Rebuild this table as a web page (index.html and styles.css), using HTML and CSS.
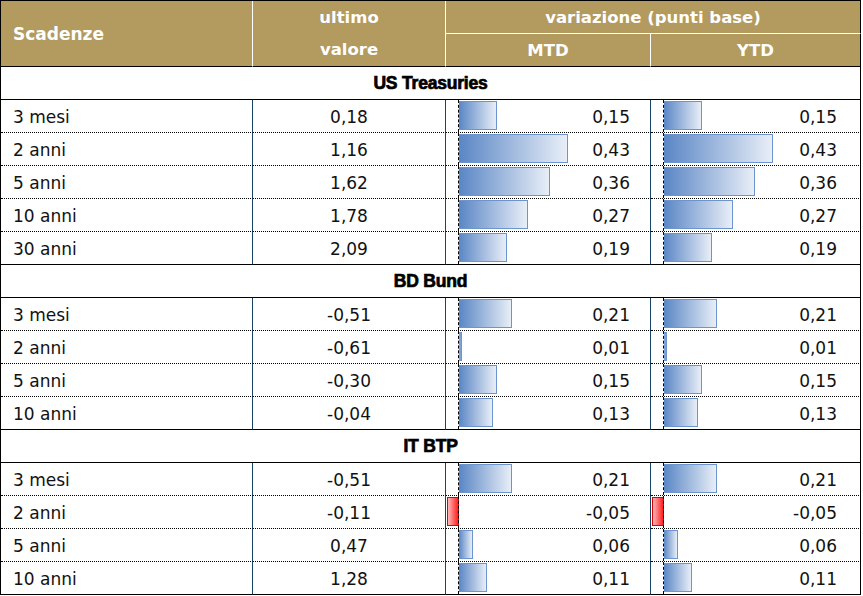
FILE: index.html
```html
<!DOCTYPE html>
<html lang="it">
<head>
<meta charset="utf-8">
<title>Scadenze</title>
<link rel="stylesheet" href="styles.css">
</head>
<body>
<div class="tbl">
  <div class="h h-scad">Scadenze</div>
  <div class="h h-ultimo"><span>ultimo</span><span>valore</span></div>
  <div class="h h-var">variazione (punti base)</div>
  <div class="h h-mtd">MTD</div>
  <div class="h h-ytd">YTD</div>

  <div class="sec">US Treasuries</div>
  <div class="row">
    <div class="c name">3 mesi</div><div class="c val">0,18</div>
    <div class="c bar"><div class="neg"></div><div class="pos"><i class="b" style="width:38px"></i><span>0,15</span></div></div>
    <div class="c bar ytd"><div class="neg"></div><div class="pos"><i class="b" style="width:38px"></i><span>0,15</span></div></div>
  </div>
  <div class="row">
    <div class="c name">2 anni</div><div class="c val">1,16</div>
    <div class="c bar"><div class="neg"></div><div class="pos"><i class="b" style="width:109px"></i><span>0,43</span></div></div>
    <div class="c bar ytd"><div class="neg"></div><div class="pos"><i class="b" style="width:109px"></i><span>0,43</span></div></div>
  </div>
  <div class="row">
    <div class="c name">5 anni</div><div class="c val">1,62</div>
    <div class="c bar"><div class="neg"></div><div class="pos"><i class="b" style="width:91px"></i><span>0,36</span></div></div>
    <div class="c bar ytd"><div class="neg"></div><div class="pos"><i class="b" style="width:91px"></i><span>0,36</span></div></div>
  </div>
  <div class="row">
    <div class="c name">10 anni</div><div class="c val">1,78</div>
    <div class="c bar"><div class="neg"></div><div class="pos"><i class="b" style="width:69px"></i><span>0,27</span></div></div>
    <div class="c bar ytd"><div class="neg"></div><div class="pos"><i class="b" style="width:69px"></i><span>0,27</span></div></div>
  </div>
  <div class="row end">
    <div class="c name">30 anni</div><div class="c val">2,09</div>
    <div class="c bar"><div class="neg"></div><div class="pos"><i class="b" style="width:48px"></i><span>0,19</span></div></div>
    <div class="c bar ytd"><div class="neg"></div><div class="pos"><i class="b" style="width:48px"></i><span>0,19</span></div></div>
  </div>

  <div class="sec">BD Bund</div>
  <div class="row">
    <div class="c name">3 mesi</div><div class="c val">-0,51</div>
    <div class="c bar"><div class="neg"></div><div class="pos"><i class="b" style="width:53px"></i><span>0,21</span></div></div>
    <div class="c bar ytd"><div class="neg"></div><div class="pos"><i class="b" style="width:53px"></i><span>0,21</span></div></div>
  </div>
  <div class="row">
    <div class="c name">2 anni</div><div class="c val">-0,61</div>
    <div class="c bar"><div class="neg"></div><div class="pos"><i class="b tiny" style="width:3px"></i><span>0,01</span></div></div>
    <div class="c bar ytd"><div class="neg"></div><div class="pos"><i class="b tiny" style="width:3px"></i><span>0,01</span></div></div>
  </div>
  <div class="row">
    <div class="c name">5 anni</div><div class="c val">-0,30</div>
    <div class="c bar"><div class="neg"></div><div class="pos"><i class="b" style="width:38px"></i><span>0,15</span></div></div>
    <div class="c bar ytd"><div class="neg"></div><div class="pos"><i class="b" style="width:38px"></i><span>0,15</span></div></div>
  </div>
  <div class="row end">
    <div class="c name">10 anni</div><div class="c val">-0,04</div>
    <div class="c bar"><div class="neg"></div><div class="pos"><i class="b" style="width:34px"></i><span>0,13</span></div></div>
    <div class="c bar ytd"><div class="neg"></div><div class="pos"><i class="b" style="width:34px"></i><span>0,13</span></div></div>
  </div>

  <div class="sec">IT BTP</div>
  <div class="row">
    <div class="c name">3 mesi</div><div class="c val">-0,51</div>
    <div class="c bar"><div class="neg"></div><div class="pos"><i class="b" style="width:53px"></i><span>0,21</span></div></div>
    <div class="c bar ytd"><div class="neg"></div><div class="pos"><i class="b" style="width:53px"></i><span>0,21</span></div></div>
  </div>
  <div class="row">
    <div class="c name">2 anni</div><div class="c val">-0,11</div>
    <div class="c bar"><div class="neg"><i class="r" style="width:12px"></i></div><div class="pos"><span>-0,05</span></div></div>
    <div class="c bar ytd"><div class="neg"><i class="r" style="width:12px"></i></div><div class="pos"><span>-0,05</span></div></div>
  </div>
  <div class="row">
    <div class="c name">5 anni</div><div class="c val">0,47</div>
    <div class="c bar"><div class="neg"></div><div class="pos"><i class="b" style="width:14px"></i><span>0,06</span></div></div>
    <div class="c bar ytd"><div class="neg"></div><div class="pos"><i class="b" style="width:14px"></i><span>0,06</span></div></div>
  </div>
  <div class="row end">
    <div class="c name">10 anni</div><div class="c val">1,28</div>
    <div class="c bar"><div class="neg"></div><div class="pos"><i class="b" style="width:28px"></i><span>0,11</span></div></div>
    <div class="c bar ytd"><div class="neg"></div><div class="pos"><i class="b" style="width:28px"></i><span>0,11</span></div></div>
  </div>
</div>
</body>
</html>
```

FILE: styles.css
```css
html, body {
  margin: 0;
  padding: 0;
  background: #fff;
}

.tbl {
  display: grid;
  grid-template-columns: 252px 193px 205px 210px;
  grid-auto-rows: 33px;
  width: 860px;
  border-left: 1px solid #000;
  border-top: 1px solid #000;
  font-family: "DejaVu Sans", "Liberation Sans", sans-serif;
  font-size: 17px;
  color: #111;
}

.tbl > div, .c {
  box-sizing: border-box;
}

.row {
  display: contents;
}

/* header */
.h {
  background: #b39a5f;
  color: #fff;
  font-weight: bold;
  font-size: 16.5px;
  display: flex;
  align-items: center;
  justify-content: center;
  border-bottom: 1px solid #000;
  border-right: 1px solid #fff;
}

.h-scad {
  grid-row: span 2;
  justify-content: flex-start;
  padding-left: 12px;
  font-size: 17px;
}

.h-ultimo {
  grid-row: span 2;
  flex-direction: column;
  line-height: 32px;
}

.h-var {
  grid-column: span 2;
  border-bottom: 1px solid #fff;
  border-right: 1px solid #000;
}

.h-ytd {
  border-right: 1px solid #000;
}

/* section row */
.sec {
  grid-column: 1 / -1;
  display: flex;
  align-items: center;
  justify-content: center;
  border-right: 1px solid #000;
  border-bottom: 1px solid #000;
  font-family: "Liberation Sans", "DejaVu Sans", sans-serif;
  font-weight: bold;
  font-size: 17.5px;
  letter-spacing: -0.2px;
  -webkit-text-stroke: 0.7px #000;
  color: #000;
  padding-top: 1px;
}

/* data cells */
.c {
  border-bottom: 1px dotted #000;
  border-right: 1px solid #1a4467;
  height: 33px;
  padding-top: 1px;
}

.row.end > .c {
  border-bottom: 1px solid #000;
}

.name {
  display: flex;
  align-items: center;
  padding-left: 12px;
}

.val {
  display: flex;
  align-items: center;
  justify-content: center;
}

.bar {
  display: grid;
  grid-template-columns: 12px 1fr;
  padding-top: 0;
}

.bar.ytd {
  border-right: 1px solid #000;
}

.neg {
  display: flex;
  justify-content: flex-end;
  align-items: flex-start;
}

.pos {
  border-left: 1px dashed #000;
  display: flex;
  align-items: center;
  padding-right: 20px;
  padding-top: 1px;
}

.ytd .pos {
  padding-right: 23px;
}

.pos span {
  margin-left: auto;
}

.b, .r {
  display: block;
  box-sizing: border-box;
  height: 29px;
  align-self: flex-start;
  margin-top: 0;
  flex: none;
}

.neg .r {
  margin-top: 1px;
}

.b {
  background: linear-gradient(to right, #5a86c5, #e8eef7);
  border: 1px solid #6c94cf;
  border-left: none;
}

.b.tiny {
  background: #7fa2d4;
}

.r {
  background: linear-gradient(to right, #ffb8b8, #ff2020);
  border: 1px solid #e00000;
  margin-right: -1px;
}
```
